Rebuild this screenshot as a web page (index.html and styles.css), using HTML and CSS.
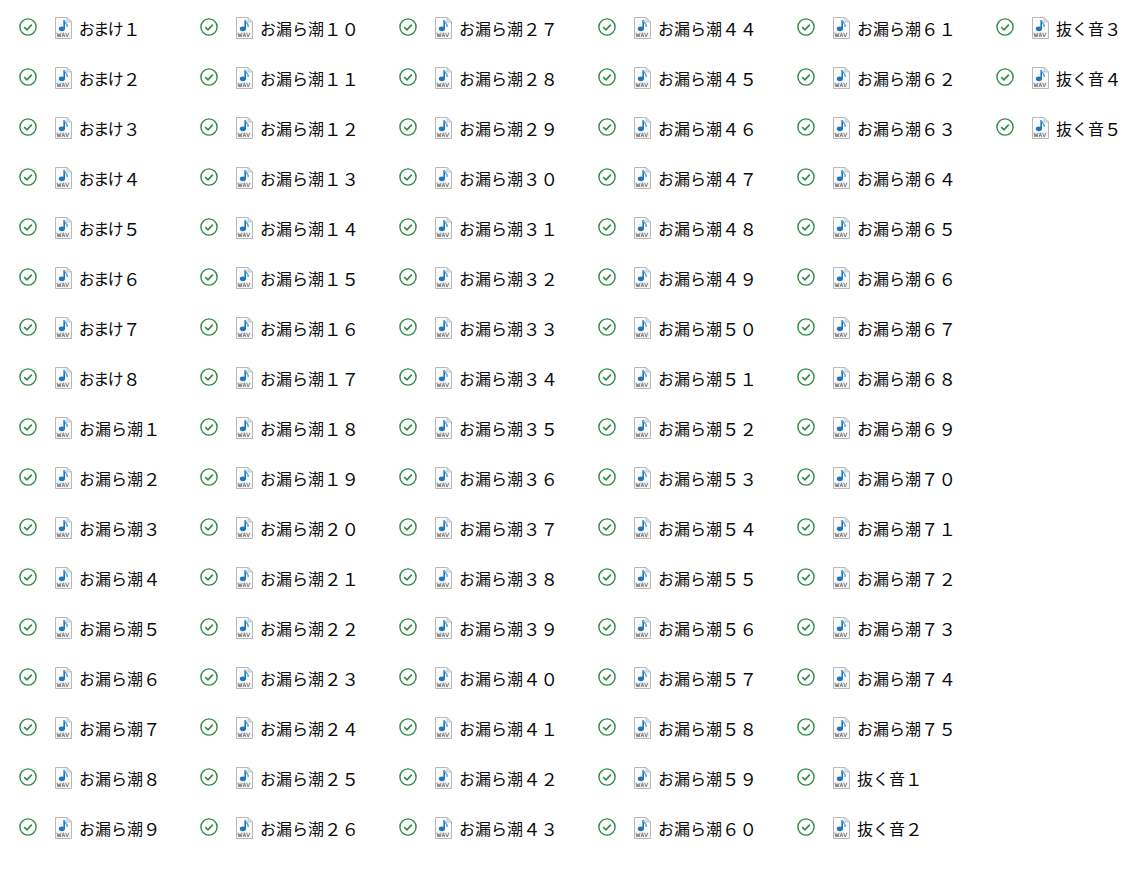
FILE: index.html
```html
<!DOCTYPE html>
<html lang="ja">
<head>
<meta charset="utf-8">
<title>Files</title>
<link rel="stylesheet" href="styles.css">
</head>
<body>
<svg class="defs" width="0" height="0" aria-hidden="true">
  <symbol id="check" viewBox="0 0 18 18">
    <circle cx="9" cy="9" r="8.1" fill="none" stroke="#2e8b45" stroke-width="1.4"/>
    <path d="M5.2 9.1 8 11.8 12.8 6.6" fill="none" stroke="#2e8b45" stroke-width="1.6"/>
  </symbol>
  <symbol id="wav" viewBox="0 0 18 22">
    <path d="M1.5.5H13L17.5 5V21.5H1.5Z" fill="#fbfbfb" stroke="#b8b8b8"/>
    <path d="M13 .5V5H17.5Z" fill="#e4e4e4" stroke="#b8b8b8" stroke-width=".7"/>
    <path d="M10.2 3V11.5" stroke="#1f73b7" stroke-width="1.6" fill="none"/>
    <path d="M10.2 3C10.8 6 13.6 6 13.2 10" stroke="#4aa3dc" stroke-width="1.3" fill="none"/>
    <ellipse cx="7.9" cy="11.8" rx="3.1" ry="2.4" fill="#1f76bd"/>
    <rect x="2" y="15" width="15" height="6" fill="#f4f4f4"/>
    <path d="M3 15.8 4 20 5 16.8 6 20 7 15.8M8 20 9.4 15.8 10.8 20M8.6 18.6H10.2M11.6 15.8 13.2 20 14.8 15.8" fill="none" stroke="#777" stroke-width=".9"/>
  </symbol>
</svg>
<ul class="files">
<li class="file"><svg class="check"><use href="#check"/></svg><svg class="wav"><use href="#wav"/></svg><span class="tight">おまけ</span><span class="num">１</span></li>
<li class="file"><svg class="check"><use href="#check"/></svg><svg class="wav"><use href="#wav"/></svg><span class="tight">おまけ</span><span class="num">２</span></li>
<li class="file"><svg class="check"><use href="#check"/></svg><svg class="wav"><use href="#wav"/></svg><span class="tight">おまけ</span><span class="num">３</span></li>
<li class="file"><svg class="check"><use href="#check"/></svg><svg class="wav"><use href="#wav"/></svg><span class="tight">おまけ</span><span class="num">４</span></li>
<li class="file"><svg class="check"><use href="#check"/></svg><svg class="wav"><use href="#wav"/></svg><span class="tight">おまけ</span><span class="num">５</span></li>
<li class="file"><svg class="check"><use href="#check"/></svg><svg class="wav"><use href="#wav"/></svg><span class="tight">おまけ</span><span class="num">６</span></li>
<li class="file"><svg class="check"><use href="#check"/></svg><svg class="wav"><use href="#wav"/></svg><span class="tight">おまけ</span><span class="num">７</span></li>
<li class="file"><svg class="check"><use href="#check"/></svg><svg class="wav"><use href="#wav"/></svg><span class="tight">おまけ</span><span class="num">８</span></li>
<li class="file"><svg class="check"><use href="#check"/></svg><svg class="wav"><use href="#wav"/></svg><span>お漏ら潮</span><span class="num">１</span></li>
<li class="file"><svg class="check"><use href="#check"/></svg><svg class="wav"><use href="#wav"/></svg><span>お漏ら潮</span><span class="num">２</span></li>
<li class="file"><svg class="check"><use href="#check"/></svg><svg class="wav"><use href="#wav"/></svg><span>お漏ら潮</span><span class="num">３</span></li>
<li class="file"><svg class="check"><use href="#check"/></svg><svg class="wav"><use href="#wav"/></svg><span>お漏ら潮</span><span class="num">４</span></li>
<li class="file"><svg class="check"><use href="#check"/></svg><svg class="wav"><use href="#wav"/></svg><span>お漏ら潮</span><span class="num">５</span></li>
<li class="file"><svg class="check"><use href="#check"/></svg><svg class="wav"><use href="#wav"/></svg><span>お漏ら潮</span><span class="num">６</span></li>
<li class="file"><svg class="check"><use href="#check"/></svg><svg class="wav"><use href="#wav"/></svg><span>お漏ら潮</span><span class="num">７</span></li>
<li class="file"><svg class="check"><use href="#check"/></svg><svg class="wav"><use href="#wav"/></svg><span>お漏ら潮</span><span class="num">８</span></li>
<li class="file"><svg class="check"><use href="#check"/></svg><svg class="wav"><use href="#wav"/></svg><span>お漏ら潮</span><span class="num">９</span></li>
<li class="file"><svg class="check"><use href="#check"/></svg><svg class="wav"><use href="#wav"/></svg><span>お漏ら潮</span><span class="num">１０</span></li>
<li class="file"><svg class="check"><use href="#check"/></svg><svg class="wav"><use href="#wav"/></svg><span>お漏ら潮</span><span class="num">１１</span></li>
<li class="file"><svg class="check"><use href="#check"/></svg><svg class="wav"><use href="#wav"/></svg><span>お漏ら潮</span><span class="num">１２</span></li>
<li class="file"><svg class="check"><use href="#check"/></svg><svg class="wav"><use href="#wav"/></svg><span>お漏ら潮</span><span class="num">１３</span></li>
<li class="file"><svg class="check"><use href="#check"/></svg><svg class="wav"><use href="#wav"/></svg><span>お漏ら潮</span><span class="num">１４</span></li>
<li class="file"><svg class="check"><use href="#check"/></svg><svg class="wav"><use href="#wav"/></svg><span>お漏ら潮</span><span class="num">１５</span></li>
<li class="file"><svg class="check"><use href="#check"/></svg><svg class="wav"><use href="#wav"/></svg><span>お漏ら潮</span><span class="num">１６</span></li>
<li class="file"><svg class="check"><use href="#check"/></svg><svg class="wav"><use href="#wav"/></svg><span>お漏ら潮</span><span class="num">１７</span></li>
<li class="file"><svg class="check"><use href="#check"/></svg><svg class="wav"><use href="#wav"/></svg><span>お漏ら潮</span><span class="num">１８</span></li>
<li class="file"><svg class="check"><use href="#check"/></svg><svg class="wav"><use href="#wav"/></svg><span>お漏ら潮</span><span class="num">１９</span></li>
<li class="file"><svg class="check"><use href="#check"/></svg><svg class="wav"><use href="#wav"/></svg><span>お漏ら潮</span><span class="num">２０</span></li>
<li class="file"><svg class="check"><use href="#check"/></svg><svg class="wav"><use href="#wav"/></svg><span>お漏ら潮</span><span class="num">２１</span></li>
<li class="file"><svg class="check"><use href="#check"/></svg><svg class="wav"><use href="#wav"/></svg><span>お漏ら潮</span><span class="num">２２</span></li>
<li class="file"><svg class="check"><use href="#check"/></svg><svg class="wav"><use href="#wav"/></svg><span>お漏ら潮</span><span class="num">２３</span></li>
<li class="file"><svg class="check"><use href="#check"/></svg><svg class="wav"><use href="#wav"/></svg><span>お漏ら潮</span><span class="num">２４</span></li>
<li class="file"><svg class="check"><use href="#check"/></svg><svg class="wav"><use href="#wav"/></svg><span>お漏ら潮</span><span class="num">２５</span></li>
<li class="file"><svg class="check"><use href="#check"/></svg><svg class="wav"><use href="#wav"/></svg><span>お漏ら潮</span><span class="num">２６</span></li>
<li class="file"><svg class="check"><use href="#check"/></svg><svg class="wav"><use href="#wav"/></svg><span>お漏ら潮</span><span class="num">２７</span></li>
<li class="file"><svg class="check"><use href="#check"/></svg><svg class="wav"><use href="#wav"/></svg><span>お漏ら潮</span><span class="num">２８</span></li>
<li class="file"><svg class="check"><use href="#check"/></svg><svg class="wav"><use href="#wav"/></svg><span>お漏ら潮</span><span class="num">２９</span></li>
<li class="file"><svg class="check"><use href="#check"/></svg><svg class="wav"><use href="#wav"/></svg><span>お漏ら潮</span><span class="num">３０</span></li>
<li class="file"><svg class="check"><use href="#check"/></svg><svg class="wav"><use href="#wav"/></svg><span>お漏ら潮</span><span class="num">３１</span></li>
<li class="file"><svg class="check"><use href="#check"/></svg><svg class="wav"><use href="#wav"/></svg><span>お漏ら潮</span><span class="num">３２</span></li>
<li class="file"><svg class="check"><use href="#check"/></svg><svg class="wav"><use href="#wav"/></svg><span>お漏ら潮</span><span class="num">３３</span></li>
<li class="file"><svg class="check"><use href="#check"/></svg><svg class="wav"><use href="#wav"/></svg><span>お漏ら潮</span><span class="num">３４</span></li>
<li class="file"><svg class="check"><use href="#check"/></svg><svg class="wav"><use href="#wav"/></svg><span>お漏ら潮</span><span class="num">３５</span></li>
<li class="file"><svg class="check"><use href="#check"/></svg><svg class="wav"><use href="#wav"/></svg><span>お漏ら潮</span><span class="num">３６</span></li>
<li class="file"><svg class="check"><use href="#check"/></svg><svg class="wav"><use href="#wav"/></svg><span>お漏ら潮</span><span class="num">３７</span></li>
<li class="file"><svg class="check"><use href="#check"/></svg><svg class="wav"><use href="#wav"/></svg><span>お漏ら潮</span><span class="num">３８</span></li>
<li class="file"><svg class="check"><use href="#check"/></svg><svg class="wav"><use href="#wav"/></svg><span>お漏ら潮</span><span class="num">３９</span></li>
<li class="file"><svg class="check"><use href="#check"/></svg><svg class="wav"><use href="#wav"/></svg><span>お漏ら潮</span><span class="num">４０</span></li>
<li class="file"><svg class="check"><use href="#check"/></svg><svg class="wav"><use href="#wav"/></svg><span>お漏ら潮</span><span class="num">４１</span></li>
<li class="file"><svg class="check"><use href="#check"/></svg><svg class="wav"><use href="#wav"/></svg><span>お漏ら潮</span><span class="num">４２</span></li>
<li class="file"><svg class="check"><use href="#check"/></svg><svg class="wav"><use href="#wav"/></svg><span>お漏ら潮</span><span class="num">４３</span></li>
<li class="file"><svg class="check"><use href="#check"/></svg><svg class="wav"><use href="#wav"/></svg><span>お漏ら潮</span><span class="num">４４</span></li>
<li class="file"><svg class="check"><use href="#check"/></svg><svg class="wav"><use href="#wav"/></svg><span>お漏ら潮</span><span class="num">４５</span></li>
<li class="file"><svg class="check"><use href="#check"/></svg><svg class="wav"><use href="#wav"/></svg><span>お漏ら潮</span><span class="num">４６</span></li>
<li class="file"><svg class="check"><use href="#check"/></svg><svg class="wav"><use href="#wav"/></svg><span>お漏ら潮</span><span class="num">４７</span></li>
<li class="file"><svg class="check"><use href="#check"/></svg><svg class="wav"><use href="#wav"/></svg><span>お漏ら潮</span><span class="num">４８</span></li>
<li class="file"><svg class="check"><use href="#check"/></svg><svg class="wav"><use href="#wav"/></svg><span>お漏ら潮</span><span class="num">４９</span></li>
<li class="file"><svg class="check"><use href="#check"/></svg><svg class="wav"><use href="#wav"/></svg><span>お漏ら潮</span><span class="num">５０</span></li>
<li class="file"><svg class="check"><use href="#check"/></svg><svg class="wav"><use href="#wav"/></svg><span>お漏ら潮</span><span class="num">５１</span></li>
<li class="file"><svg class="check"><use href="#check"/></svg><svg class="wav"><use href="#wav"/></svg><span>お漏ら潮</span><span class="num">５２</span></li>
<li class="file"><svg class="check"><use href="#check"/></svg><svg class="wav"><use href="#wav"/></svg><span>お漏ら潮</span><span class="num">５３</span></li>
<li class="file"><svg class="check"><use href="#check"/></svg><svg class="wav"><use href="#wav"/></svg><span>お漏ら潮</span><span class="num">５４</span></li>
<li class="file"><svg class="check"><use href="#check"/></svg><svg class="wav"><use href="#wav"/></svg><span>お漏ら潮</span><span class="num">５５</span></li>
<li class="file"><svg class="check"><use href="#check"/></svg><svg class="wav"><use href="#wav"/></svg><span>お漏ら潮</span><span class="num">５６</span></li>
<li class="file"><svg class="check"><use href="#check"/></svg><svg class="wav"><use href="#wav"/></svg><span>お漏ら潮</span><span class="num">５７</span></li>
<li class="file"><svg class="check"><use href="#check"/></svg><svg class="wav"><use href="#wav"/></svg><span>お漏ら潮</span><span class="num">５８</span></li>
<li class="file"><svg class="check"><use href="#check"/></svg><svg class="wav"><use href="#wav"/></svg><span>お漏ら潮</span><span class="num">５９</span></li>
<li class="file"><svg class="check"><use href="#check"/></svg><svg class="wav"><use href="#wav"/></svg><span>お漏ら潮</span><span class="num">６０</span></li>
<li class="file"><svg class="check"><use href="#check"/></svg><svg class="wav"><use href="#wav"/></svg><span>お漏ら潮</span><span class="num">６１</span></li>
<li class="file"><svg class="check"><use href="#check"/></svg><svg class="wav"><use href="#wav"/></svg><span>お漏ら潮</span><span class="num">６２</span></li>
<li class="file"><svg class="check"><use href="#check"/></svg><svg class="wav"><use href="#wav"/></svg><span>お漏ら潮</span><span class="num">６３</span></li>
<li class="file"><svg class="check"><use href="#check"/></svg><svg class="wav"><use href="#wav"/></svg><span>お漏ら潮</span><span class="num">６４</span></li>
<li class="file"><svg class="check"><use href="#check"/></svg><svg class="wav"><use href="#wav"/></svg><span>お漏ら潮</span><span class="num">６５</span></li>
<li class="file"><svg class="check"><use href="#check"/></svg><svg class="wav"><use href="#wav"/></svg><span>お漏ら潮</span><span class="num">６６</span></li>
<li class="file"><svg class="check"><use href="#check"/></svg><svg class="wav"><use href="#wav"/></svg><span>お漏ら潮</span><span class="num">６７</span></li>
<li class="file"><svg class="check"><use href="#check"/></svg><svg class="wav"><use href="#wav"/></svg><span>お漏ら潮</span><span class="num">６８</span></li>
<li class="file"><svg class="check"><use href="#check"/></svg><svg class="wav"><use href="#wav"/></svg><span>お漏ら潮</span><span class="num">６９</span></li>
<li class="file"><svg class="check"><use href="#check"/></svg><svg class="wav"><use href="#wav"/></svg><span>お漏ら潮</span><span class="num">７０</span></li>
<li class="file"><svg class="check"><use href="#check"/></svg><svg class="wav"><use href="#wav"/></svg><span>お漏ら潮</span><span class="num">７１</span></li>
<li class="file"><svg class="check"><use href="#check"/></svg><svg class="wav"><use href="#wav"/></svg><span>お漏ら潮</span><span class="num">７２</span></li>
<li class="file"><svg class="check"><use href="#check"/></svg><svg class="wav"><use href="#wav"/></svg><span>お漏ら潮</span><span class="num">７３</span></li>
<li class="file"><svg class="check"><use href="#check"/></svg><svg class="wav"><use href="#wav"/></svg><span>お漏ら潮</span><span class="num">７４</span></li>
<li class="file"><svg class="check"><use href="#check"/></svg><svg class="wav"><use href="#wav"/></svg><span>お漏ら潮</span><span class="num">７５</span></li>
<li class="file"><svg class="check"><use href="#check"/></svg><svg class="wav"><use href="#wav"/></svg><span>抜く音</span><span class="num">１</span></li>
<li class="file"><svg class="check"><use href="#check"/></svg><svg class="wav"><use href="#wav"/></svg><span>抜く音</span><span class="num">２</span></li>
<li class="file"><svg class="check"><use href="#check"/></svg><svg class="wav"><use href="#wav"/></svg><span>抜く音</span><span class="num">３</span></li>
<li class="file"><svg class="check"><use href="#check"/></svg><svg class="wav"><use href="#wav"/></svg><span>抜く音</span><span class="num">４</span></li>
<li class="file"><svg class="check"><use href="#check"/></svg><svg class="wav"><use href="#wav"/></svg><span>抜く音</span><span class="num">５</span></li>
</ul>
</body>
</html>
```

FILE: styles.css
```css
html, body { margin: 0; padding: 0; background: #fff; }
body { height: 883px; overflow: hidden; font-family: "Noto Sans CJK JP", "Liberation Sans", sans-serif; font-size: 16px; color: #0a0a0a; }
.defs { position: absolute; }
.files { list-style: none; margin: 0; padding: 3px 0 0 19px; display: grid; grid-auto-flow: column; grid-template-rows: repeat(17, 50px); grid-template-columns: 181px repeat(5, 199px); }
.file { display: flex; align-items: center; white-space: nowrap; }
.tight { font-feature-settings: "palt"; letter-spacing: -0.6px; }
.num { font-size: 17.5px; }
.check { width: 18px; height: 18px; margin-top: -2px; margin-right: 17px; }
.wav { width: 18px; height: 22px; margin-right: 7px; }
```
